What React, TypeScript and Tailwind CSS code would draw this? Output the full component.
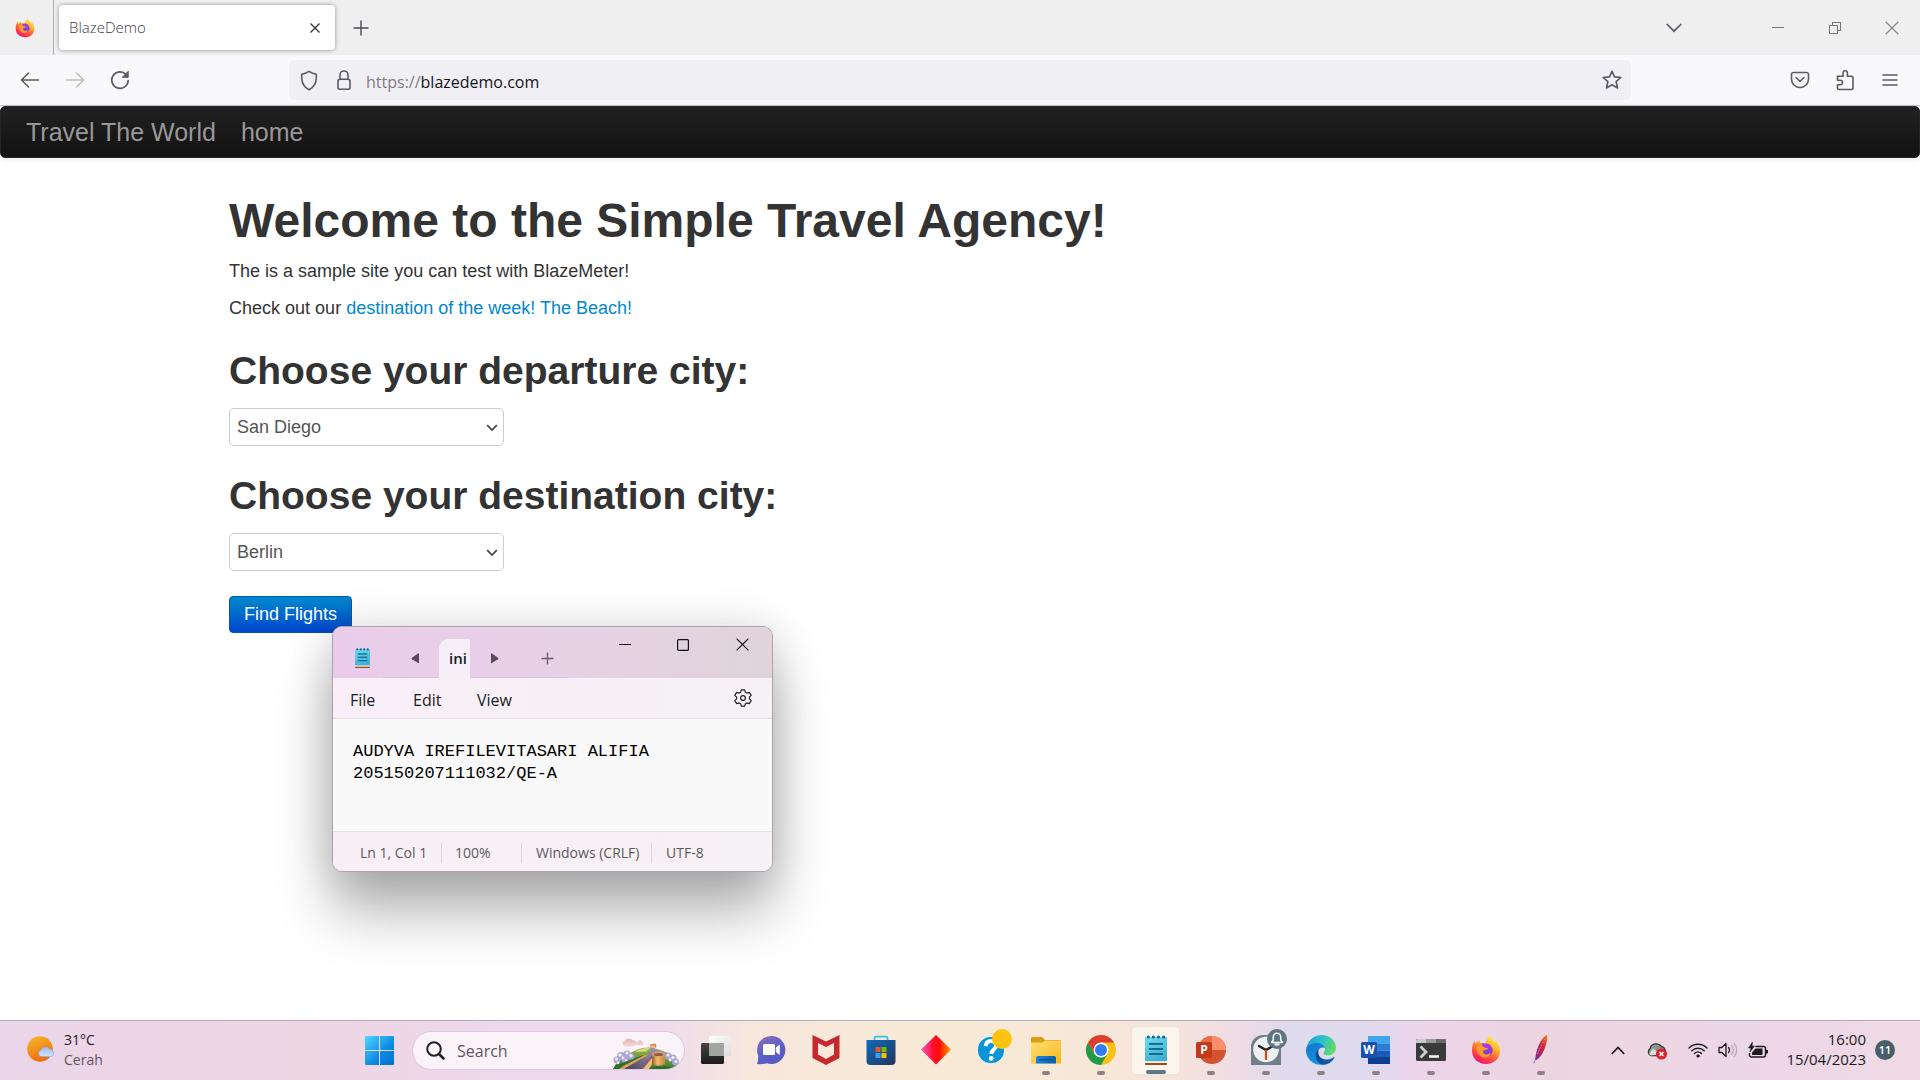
import React, { useId } from "react";

const UI = "font-['Open_Sans','Noto_Sans',sans-serif]";

/* ---------- shared logos ---------- */

function FirefoxLogo({ size }: { size: number }) {
  const id = useId();
  return (
    <svg width={size} height={size} viewBox="0 0 30 30" aria-hidden="true">
      <defs>
        <linearGradient id={id + "a"} x1="0.8" y1="0" x2="0.3" y2="1">
          <stop offset="0" stopColor="#fff44f" />
          <stop offset="0.35" stopColor="#ffb82a" />
          <stop offset="0.6" stopColor="#ff6a32" />
          <stop offset="0.85" stopColor="#ff2b56" />
          <stop offset="1" stopColor="#e31587" />
        </linearGradient>
        <linearGradient id={id + "b"} x1="0.7" y1="0" x2="0.3" y2="1">
          <stop offset="0" stopColor="#b833e1" />
          <stop offset="1" stopColor="#5b4bd0" />
        </linearGradient>
      </defs>
      <path
        fill={`url(#${id}a)`}
        d="M4 4.8C3.8 6.6 4 7.6 4.6 8.6L8.6 5.2C8.7 7 9.4 8 10.4 8.3L14.3 8.6C15.2 5 17 2.6 19.8.6 20 3.6 22 5 23.4 7 24 7.6 24.8 7 24.7 5.6 27.3 8 29 12 29 16 29 23.5 23 29 15 29S1 23.5 1 15.5C1 11.2 2.2 7.6 4 4.8Z"
      />
      <circle cx="15.3" cy="15.2" r="6.4" fill={`url(#${id}b)`} />
      <path
        fill="#ff9a2e"
        d="M5.5 12.5C8 10 11.5 10.2 13.5 12.2 14.5 13 16 12.8 17 13.2 16.5 14.8 14 14.8 12.5 15.5 11.5 16.5 12 18.5 14 19.2 16.5 20 18.5 18.5 19.5 17.5 19 21.5 15.5 23.2 12 22.2 8 21 5.5 17 5.5 12.5Z"
      />
      <path fill="#a63be8" d="M10.5 8.3 14.3 8.6C16.5 8.6 18 9 19.5 10.4 17 10 15.5 10.6 15 11.8 13 11.5 11 10.5 10.5 8.3Z" />
    </svg>
  );
}

function NotepadLogo({ w, h }: { w: number; h: number }) {
  const id = useId();
  return (
    <svg width={w} height={h} viewBox="0 0 22 30" preserveAspectRatio="none" aria-hidden="true">
      <defs>
        <linearGradient id={id} x1="0" y1="0" x2="0.4" y2="1">
          <stop offset="0" stopColor="#72dcf4" />
          <stop offset="1" stopColor="#3fb0d4" />
        </linearGradient>
      </defs>
      <rect x="0" y="27.5" width="22" height="2.5" rx="1" fill="#a5480f" />
      <rect x="0" y="25.5" width="22" height="2.3" fill="#fff" />
      <rect x="0" y="2" width="22" height="24.2" rx="1" fill={`url(#${id})`} />
      <g fill="#11698a">
        <circle cx="3.3" cy="2" r="1.6" />
        <circle cx="8.4" cy="2" r="1.6" />
        <circle cx="13.5" cy="2" r="1.6" />
        <circle cx="18.6" cy="2" r="1.6" />
        <rect x="4" y="8" width="14" height="1.9" />
        <rect x="4" y="13" width="14" height="1.9" />
        <rect x="4" y="18" width="14" height="1.9" />
      </g>
    </svg>
  );
}

/* ---------- browser chrome ---------- */

function TabStrip() {
  return (
    <div className="flex h-[55px] items-stretch bg-[#efefef]">
      <div className="flex w-[54px] shrink-0 items-center justify-center border-r border-[#b0b0b4] pr-1">
        <FirefoxLogo size={20} />
      </div>
      <div className="my-[5px] ml-[5px] flex w-[276px] items-center justify-between rounded-[4px] bg-white pl-[10px] pr-3 shadow-[0_0_4px_rgba(0,0,0,0.4)]">
        <span className="text-[15px] font-light text-[#3a3944]">BlazeDemo</span>
        <button aria-label="Close tab" className="flex size-4 items-center justify-center">
          <svg width="10" height="10" viewBox="0 0 10 10" stroke="#33323c" strokeWidth="1.3" fill="none">
            <path d="M.5.5 9.5 9.5M9.5.5.5 9.5" />
          </svg>
        </button>
      </div>
      <button aria-label="New tab" className="ml-[18px] flex w-4 items-center justify-center">
        <svg width="16" height="16" viewBox="0 0 16 16" stroke="#4a4954" strokeWidth="1.4">
          <path d="M8 .5V15.5M.5 8H15.5" />
        </svg>
      </button>
      <div className="ml-auto flex items-center">
        <button aria-label="List all tabs" className="mr-[46px] flex h-full w-[58px] items-center justify-center">
          <svg width="16" height="10" viewBox="0 0 16 10" fill="none" stroke="#5b5a66" strokeWidth="1.7">
            <path d="M.8 1 8 8.2 15.2 1" />
          </svg>
        </button>
        <button aria-label="Minimize" className="flex h-full w-[57px] items-center justify-center">
          <svg width="12" height="12" viewBox="0 0 12 12" stroke="#777" shapeRendering="crispEdges">
            <path d="M0 5.5H12" />
          </svg>
        </button>
        <button aria-label="Restore" className="flex h-full w-[57px] items-center justify-center">
          <svg width="12" height="12" viewBox="0 0 12 12" fill="none" stroke="#777" shapeRendering="crispEdges">
            <path d="M.5 3.5H8.5V11.5H.5ZM3.5 3V.5H11.5V8.5H9" />
          </svg>
        </button>
        <button aria-label="Close" className="flex h-full w-[57px] items-center justify-center">
          <svg width="14" height="14" viewBox="0 0 14 14" stroke="#777" strokeWidth="1.1">
            <path d="M.8.8 13.2 13.2M13.2.8.8 13.2" />
          </svg>
        </button>
      </div>
    </div>
  );
}

function NavBar() {
  const ink = "#5b5a66";
  return (
    <div className="flex h-[51px] items-center border-b border-[#c8c8cc] bg-[#f9f9fb]">
      <div className="flex w-[289px] shrink-0 items-center gap-[21px] pl-[18px]">
        <button aria-label="Back" className="flex size-6 items-center justify-center">
          <svg width="20" height="18" viewBox="0 0 20 18" fill="none" stroke={ink} strokeWidth="1.6" strokeLinecap="round" strokeLinejoin="round">
            <path d="M18.5 9H1.5M8.5 2 1.5 9 8.5 16" />
          </svg>
        </button>
        <button aria-label="Forward" disabled className="flex size-6 items-center justify-center">
          <svg width="20" height="18" viewBox="0 0 20 18" fill="none" stroke="#bcbcc2" strokeWidth="1.6" strokeLinecap="round" strokeLinejoin="round">
            <path d="M1.5 9H18.5M11.5 2 18.5 9 11.5 16" />
          </svg>
        </button>
        <button aria-label="Reload" className="flex size-6 items-center justify-center">
          <svg width="20" height="20" viewBox="0 0 20 20" fill="none" stroke={ink} strokeWidth="1.7" strokeLinecap="round">
            <path d="M16 4.5A8.2 8.2 0 1 0 18.2 10.5" />
            <path d="M18.2 1.6V7.3H12.6Z" fill={ink} strokeWidth="1" strokeLinejoin="round" />
          </svg>
        </button>
      </div>
      <div className="flex h-10 flex-1 items-center rounded-[5px] bg-[#f0eff4] pl-[10px] pr-[9px]">
        <button aria-label="Tracking protection" className="flex size-5 items-center justify-center">
          <svg width="20" height="21" viewBox="0 0 20 21" fill="none" stroke={ink} strokeWidth="1.6" strokeLinejoin="round">
            <path d="M10 1.3Q13.500 3.700 17.300 4.300V7.500C17.300 13 14.500 17.500 10 19.700 5.500 17.500 2.700 13 2.700 7.500V4.300Q6.500 3.700 10 1.300Z" />
          </svg>
        </button>
        <button aria-label="Site security" className="ml-[15px] flex size-5 items-center justify-center">
          <svg width="16" height="20" viewBox="0 0 16 20" fill="none" stroke={ink} strokeWidth="1.6">
            <path d="M4 9.5V5A4 4 0 0 1 12 5V9.5" />
            <rect x="2" y="9.2" width="12" height="10" rx="2" />
          </svg>
        </button>
        <label className="ml-3 flex flex-1 items-center pt-[3px] text-[16px] text-[#7d7c86]">
          <span>https://</span>
          <input aria-label="Address" defaultValue="blazedemo.com" className="min-w-0 flex-1 bg-transparent text-[#15141a] outline-none" />
        </label>
        <button aria-label="Bookmark this page" className="flex size-5 items-center justify-center">
          <svg width="20" height="20" viewBox="0 0 20 20" fill="none" stroke={ink} strokeWidth="1.6" strokeLinejoin="round">
            <path d="M10 1.2 12.5 6.9 18.8 7.5 14.1 11.7 15.5 18 10 14.7 4.5 18 5.9 11.7 1.2 7.5 7.5 6.9Z" />
          </svg>
        </button>
      </div>
      <div className="flex w-[289px] shrink-0 items-center justify-end gap-[25px] pr-5">
        <button aria-label="Save to Pocket" className="flex size-5 items-center justify-center">
          <svg width="20" height="18" viewBox="0 0 20 18" fill="none" stroke={ink} strokeWidth="1.6" strokeLinecap="round" strokeLinejoin="round">
            <path d="M3 1.5H17A1.700 1.700 0 0 1 18.500 3V8A8.500 8.500 0 0 1 1.500 8V3A1.700 1.700 0 0 1 3 1.500Z" />
            <path d="M6 6.5 10 10.3 14 6.5" />
          </svg>
        </button>
        <button aria-label="Extensions" className="flex size-5 items-center justify-center">
          <svg width="20" height="22" viewBox="0 0 20 22" fill="none" stroke={ink} strokeWidth="1.6" strokeLinejoin="round">
            <path d="M2.500 7.200H8V4A2.200 2.200 0 0 1 12.400 4V7.200H16.500A1.500 1.500 0 0 1 18 8.700V19A1.500 1.500 0 0 1 16.500 20.500H4A1.500 1.500 0 0 1 2.500 19V15.700H5.200A2.200 2.200 0 0 0 5.200 11.300H2.500Z" />
          </svg>
        </button>
        <button aria-label="Menu" className="flex size-5 items-center justify-center">
          <svg width="16" height="14" viewBox="0 0 16 14" stroke={ink} strokeWidth="1.5" strokeLinecap="round">
            <path d="M1 2H15M1 7H15M1 12H15" />
          </svg>
        </button>
      </div>
    </div>
  );
}

/* ---------- web page ---------- */

function CitySelect({ label, options }: { label: string; options: string[] }) {
  return (
    <div className="relative h-[38px] w-[275px]">
      <select
        aria-label={label}
        className="h-full w-full appearance-none rounded-[5px] border border-[#ccc] bg-white pl-[7px] pr-8 text-[18px] text-[#555]"
      >
        {options.map((o) => (
          <option key={o}>{o}</option>
        ))}
      </select>
      <svg className="pointer-events-none absolute right-[6px] top-4" width="12" height="8" viewBox="0 0 12 8" fill="none" stroke="#444" strokeWidth="1.7">
        <path d="M1.2 1.2 6 6 10.8 1.2" />
      </svg>
    </div>
  );
}

function TravelPage() {
  return (
    <div className="font-['Liberation_Sans',Arial,sans-serif] text-[18px] leading-[25px] text-[#333]">
      <nav className="flex h-[52px] items-center gap-[25px] rounded-[5px] border border-[#252525] bg-linear-to-b from-[#222] to-[#111] px-[25px] text-[25px] text-[#999] shadow-[0_1px_5px_rgba(0,0,0,0.1)]">
        <a href="#">Travel The World</a>
        <a href="#">home</a>
      </nav>
      <main className="mx-auto w-[76.14%] pt-[38px]">
        <h1 className="mb-[13px] text-[48px] font-bold leading-[50px]">Welcome to the Simple Travel Agency!</h1>
        <p className="mb-3">The is a sample site you can test with BlazeMeter!</p>
        <p>
          Check out our{" "}
          <a href="#" className="text-[#0088cc]">
            destination of the week! The Beach!
          </a>
        </p>
        <h2 className="mb-3 mt-[25px] text-[39px] font-bold leading-[50px]">Choose your departure city:</h2>
        <CitySelect label="Departure city" options={["San Diego", "Paris", "Boston"]} />
        <h2 className="mb-3 mt-[25px] text-[39px] font-bold leading-[50px]">Choose your destination city:</h2>
        <CitySelect label="Destination city" options={["Berlin", "Rome", "London"]} />
        <button className="mt-[25px] h-[37px] rounded-[4px] border border-[#0055b8] bg-linear-to-b from-[#0088cc] to-[#0044cc] px-[14px] text-[18px] leading-[25px] text-white">
          Find Flights
        </button>
      </main>
    </div>
  );
}

/* ---------- notepad window ---------- */

function NotepadWindow() {
  return (
    <section
      aria-label="Notepad"
      className="absolute left-[332px] top-[626px] flex w-[441px] flex-col overflow-hidden rounded-[10px] border border-[#a9a4a9] bg-[#f9f9f9] shadow-[0_40px_56px_rgba(0,0,0,0.3),0_0_44px_rgba(0,0,0,0.14)]"
    >
      <div className="flex h-[51px] bg-linear-to-r from-[#eaccea] via-[#e7d1e6] to-[#e0d4da]">
        <div className="flex items-end">
          <div className="flex h-[38px] w-[50px] items-center justify-end pb-[2px] pr-[13px]">
            <NotepadLogo w={15} h={20} />
          </div>
          <div className="flex h-[38px] w-[56px] items-center justify-end border-b border-[#d8c2da] pr-[19px]">
            <button aria-label="Scroll tabs left">
              <svg width="9" height="11" viewBox="0 0 9 11" fill="#5a4a5a">
                <path d="M8 .5V10.5L1 6.3Q0 5.5 1 4.7L7 .5Z" />
              </svg>
            </button>
          </div>
          <button className="h-[39px] w-[31px] rounded-tl-[9px] bg-[#f7eff7] pl-[10px] text-left text-[15px] font-semibold text-[#1b1b1b]">ini</button>
          <div className="flex h-[38px] w-[98px] items-center border-b border-[#d8c2da] pl-5">
            <button aria-label="Scroll tabs right">
              <svg width="9" height="11" viewBox="0 0 9 11" fill="#5a4a5a">
                <path d="M1 .5V10.5L8 6.3Q9 5.5 8 4.7L2 .5Z" />
              </svg>
            </button>
            <button aria-label="New tab" className="ml-[42px]">
              <svg width="13" height="13" viewBox="0 0 13 13" stroke="#6a5c6a" strokeWidth="1.3">
                <path d="M6.5.5V12.5M.5 6.5H12.5" />
              </svg>
            </button>
          </div>
        </div>
        <div className="ml-auto flex h-[35px]">
          <button aria-label="Minimize" className="flex w-[58px] items-center justify-center">
            <svg width="12" height="12" viewBox="0 0 12 12" stroke="#111" shapeRendering="crispEdges">
              <path d="M0 5.5H12" />
            </svg>
          </button>
          <button aria-label="Maximize" className="flex w-[58px] items-center justify-center">
            <svg width="12" height="12" viewBox="0 0 12 12" stroke="#111" fill="none" strokeWidth="1.2">
              <rect x=".6" y=".6" width="10.8" height="10.8" rx="1" />
            </svg>
          </button>
          <button aria-label="Close" className="flex w-[60px] items-center justify-center">
            <svg width="13" height="13" viewBox="0 0 13 13" stroke="#111" strokeWidth="1.2">
              <path d="M.6.6 12.4 12.4M12.4.6.6 12.4" />
            </svg>
          </button>
        </div>
      </div>
      <div className="flex h-[41px] items-center border-b border-[#e6dfe6] bg-linear-to-r from-[#fbeef8] via-[#f6f0f6] to-[#f6f1f5] pl-[17px] pr-5 text-[16px] text-[#1b1b1b]">
        <button className="w-[63px] pt-[3px] text-left">File</button>
        <button className="w-16 pt-[3px] text-left">Edit</button>
        <button className="pt-[3px] text-left">View</button>
        <button aria-label="Settings" className="ml-auto">
          <svg width="18" height="18" viewBox="0 0 18 18" fill="none" stroke="#222" strokeWidth="1.2" strokeLinejoin="round">
            <path d="M7.3.8H10.7L11.3 3.2 12.9 4.1 15.3 3.4 17.2 6.4 15.4 8.1V9.9L17.2 11.6 15.3 14.6 12.9 13.9 11.3 14.8 10.7 17.2H7.3L6.7 14.8 5.1 13.9 2.7 14.6.8 11.6 2.6 9.9V8.1L.8 6.4 2.7 3.4 5.1 4.1 6.7 3.2Z" />
            <circle cx="9" cy="9" r="2.4" />
          </svg>
        </button>
      </div>
      <textarea
        aria-label="Text editor"
        spellCheck={false}
        defaultValue={"AUDYVA IREFILEVITASARI ALIFIA\n205150207111032/QE-A"}
        className="h-[112px] resize-none bg-[#f9f9f9] px-5 pt-[22px] font-['Liberation_Mono',monospace] text-[17px] leading-[22px] text-black outline-none"
      />
      <div className="flex h-10 items-center border-t border-[#e6dfe6] bg-linear-to-r from-[#f8eff6] to-[#f6f1f5] pt-[2px] text-[14px] leading-5 text-[#5c5a5e]">
        <span className="w-[109px] border-r border-[#ddd5dc] pl-[27px]">Ln 1, Col 1</span>
        <span className="w-20 border-r border-[#ddd5dc] pl-[13px]">100%</span>
        <span className="w-[130px] whitespace-nowrap border-r border-[#ddd5dc] pl-[14px]">Windows (CRLF)</span>
        <span className="pl-[14px]">UTF-8</span>
      </div>
    </section>
  );
}

/* ---------- taskbar ---------- */

type App = { name: string; icon: React.ReactNode; state?: "open" | "active" };

function Svg({ children }: { children: React.ReactNode }) {
  return (
    <svg width="30" height="30" viewBox="0 0 30 30" aria-hidden="true" className="overflow-visible">
      {children}
    </svg>
  );
}

const apps: App[] = [
  {
    name: "Task view",
    icon: (
      <Svg>
        <defs>
          <linearGradient id="tv1" x1="0" y1="0" x2="0" y2="1"><stop offset="0" stopColor="#444" /><stop offset="1" stopColor="#1c1c1c" /></linearGradient>
          <linearGradient id="tv2" x1="0" y1="0" x2="1" y2="1"><stop offset="0" stopColor="#fff" /><stop offset="1" stopColor="#dcdcdc" /></linearGradient>
        </defs>
        <rect x="0" y="8" width="23" height="21" rx="1.5" fill="url(#tv1)" />
        <rect x="8" y="1" width="22" height="20" rx="1.5" fill="url(#tv2)" />
        <path d="M8 8H23V21H9.500A1.500 1.500 0 0 1 8 19.500Z" fill="#a4a4a2" />
      </Svg>
    ),
  },
  {
    name: "Chat",
    icon: (
      <Svg>
        <defs>
          <linearGradient id="ch" x1="0.2" y1="0" x2="0.7" y2="1"><stop offset="0" stopColor="#8a6bb5" /><stop offset="0.5" stopColor="#5b62c8" /><stop offset="1" stopColor="#5557c4" /></linearGradient>
        </defs>
        <path d="M15.500 1A14 14 0 1 1 11 28.300Q6 29.500 1 29 2.500 25.500 2.200 20.500A14 14 0 0 1 15.500 1Z" fill="url(#ch)" />
        <rect x="7" y="9" width="12" height="11" rx="1.5" fill="#fff" />
        <path d="M20.2 12.5 23.5 10V19.500L20.200 17Z" fill="#fff" stroke="#fff" strokeWidth=".6" strokeLinejoin="round" />
      </Svg>
    ),
  },
  {
    name: "McAfee",
    icon: (
      <Svg>
        <path fillRule="evenodd" d="M1.500 0 15 6.500 28.500 0V23L15 30 1.500 23ZM7 8V19.500L15 24 23 19.500V8L15 12Z" fill="#c5282f" />
      </Svg>
    ),
  },
  {
    name: "Microsoft Store",
    icon: (
      <Svg>
        <defs>
          <linearGradient id="st" x1="0" y1="0" x2="1" y2="1"><stop offset="0" stopColor="#0f6cbd" /><stop offset="1" stopColor="#22345c" /></linearGradient>
        </defs>
        <path d="M8.500 6V3A1.500 1.500 0 0 1 10 1.600H20A1.500 1.500 0 0 1 21.500 3V6" fill="none" stroke="#35c1f1" strokeWidth="1.8" />
        <path d="M.5 5H29.500V26A4 4 0 0 1 25.500 30H4.500A4 4 0 0 1 .5 26Z" fill="url(#st)" />
        <path d="M9.500 12H14.500V17H9.500Z" fill="#f25022" />
        <path d="M15.500 12H20.500V17H15.500Z" fill="#7fba00" />
        <path d="M9.500 18H14.500V23H9.500Z" fill="#2aa7f0" />
        <path d="M15.500 18H20.500V23H15.500Z" fill="#ffb900" />
      </Svg>
    ),
  },
  {
    name: "Diamond launcher",
    icon: (
      <Svg>
        <defs>
          <linearGradient id="dm" x1="0" y1="0" x2="1" y2="0"><stop offset="0" stopColor="#f25ad0" /><stop offset="0.4" stopColor="#ff1030" /><stop offset="0.6" stopColor="#ff0a0a" /><stop offset="1" stopColor="#ff9d00" /></linearGradient>
        </defs>
        <path d="M15 0 30 14.500 15 29.500 0 14.500Z" fill="url(#dm)" />
      </Svg>
    ),
  },
  {
    name: "Get help",
    icon: (
      <Svg>
        <circle cx="15" cy="15" r="13.8" fill="#0a95d8" stroke="#fff" strokeWidth="1" />
        <path d="M9.800 11.200C10 7.500 12.300 6 15 6 18 6 20.200 7.800 20.200 10.600 20.200 14 15.300 14.500 15.300 19" fill="none" stroke="#fff" strokeWidth="4" />
        <circle cx="15.2" cy="23.5" r="2.4" fill="#fff" />
        <circle cx="26" cy="4" r="10" fill="#ffc20e" />
      </Svg>
    ),
  },
  {
    name: "File Explorer",
    state: "open",
    icon: (
      <Svg>
        <defs>
          <linearGradient id="fe" x1="0" y1="0" x2="1" y2="1"><stop offset="0" stopColor="#ffdf75" /><stop offset="1" stopColor="#f7b81c" /></linearGradient>
          <linearGradient id="fb" x1="0" y1="0" x2="1" y2="0"><stop offset="0" stopColor="#1a86da" /><stop offset="1" stopColor="#0a5fb0" /></linearGradient>
        </defs>
        <path d="M0 3.500A1.500 1.500 0 0 1 1.500 2H11L14 5H28.500A1.500 1.500 0 0 1 30 6.500V12H0Z" fill="#dd9d10" />
        <path d="M0 7.500H11.500L14 5.500H30V28.500H0Z" fill="url(#fe)" />
        <path d="M5 28.500V23A2 2 0 0 1 7 21H23A2 2 0 0 1 25 23V28.500Z" fill="url(#fb)" />
        <path d="M8 24.700H22" stroke="#0b4a8e" strokeWidth="1.3" />
      </Svg>
    ),
  },
  {
    name: "Chrome",
    state: "open",
    icon: (
      <Svg>
        <circle cx="15" cy="15" r="15" fill="#fbc116" />
        <path d="M2 7.500A15 15 0 0 0 15 30L21.500 18.800 8.500 18.800Z" fill="#219a4b" />
        <path d="M15 7.500H28A15 15 0 0 0 2 7.500L8.500 18.800Z" fill="#dc3d30" />
        <circle cx="15" cy="15" r="7.5" fill="#fff" />
        <circle cx="15" cy="15" r="6" fill="#2f7df0" />
      </Svg>
    ),
  },
  { name: "Notepad", state: "active", icon: <NotepadLogo w={22} h={30} /> },
  {
    name: "PowerPoint",
    state: "open",
    icon: (
      <Svg>
        <circle cx="16" cy="15" r="14" fill="#d35230" />
        <path d="M16 1A14 14 0 0 1 30 15H16Z" fill="#ff8f6b" />
        <path d="M16 1V15H2A14 14 0 0 1 16 1Z" fill="#ed6c47" />
        <rect x="0" y="7" width="16" height="16" rx="1.5" fill="#c13b1b" />
        <text x="8" y="19" textAnchor="middle" fontSize="12" fontWeight="700" fill="#fff" fontFamily="Open Sans">P</text>
      </Svg>
    ),
  },
  {
    name: "Clock",
    state: "open",
    icon: (
      <Svg>
        <path d="M0 30V12A12 12 0 0 1 12 0H22A8 8 0 0 1 30 8V30Z" fill="#6f7e88" />
        <circle cx="15" cy="14.5" r="12.8" fill="#eef0f1" />
        <path d="M15 15 8 11M15 15 22 11" stroke="#222" strokeWidth="2.4" strokeLinecap="round" />
        <path d="M15 15V25" stroke="#d9481c" strokeWidth="2.2" />
        <circle cx="26" cy="4" r="10" fill="#5c7683" />
        <path d="M20.500 7.500 22.300 5V2A3.700 3.700 0 0 1 29.700 2V5L31.500 7.500Z" fill="none" stroke="#fff" strokeWidth="1.5" strokeLinejoin="round" />
        <path d="M24.300 9.500H27.700" stroke="#fff" strokeWidth="1.8" strokeLinecap="round" />
      </Svg>
    ),
  },
  {
    name: "Edge",
    state: "open",
    icon: (
      <Svg>
        <defs>
          <linearGradient id="e1" x1="0" y1="0.3" x2="1" y2="0.6"><stop offset="0" stopColor="#1a9fdc" /><stop offset="0.5" stopColor="#2fc2c8" /><stop offset="1" stopColor="#62e05a" /></linearGradient>
          <linearGradient id="e2" x1="0" y1="0" x2="0.6" y2="1"><stop offset="0" stopColor="#1476c8" /><stop offset="1" stopColor="#1593e6" /></linearGradient>
          <linearGradient id="e3" x1="0" y1="0" x2="1" y2="0.5"><stop offset="0" stopColor="#0b3f86" /><stop offset="1" stopColor="#1161b0" /></linearGradient>
        </defs>
        <path d="M.3 13C2 5 8.500 0 15.500 0 24 0 30 6.200 30 12.800 30 17.500 26.500 20.300 22.500 20.300 19 20.300 17.500 19.200 17.500 18.200 17.500 17.200 19 16.500 19 14 19 11 16 8.500 11 8.500 6 8.500 2.300 10.500.3 13Z" fill="url(#e1)" />
        <path d="M.3 13C2.300 9.500 6.500 8 11 8 15 8 18 10 19 13 15 11 11 14.500 11 19.500 11 24 14 28 18.500 29.500 8 31.500 0 24 0 15.500Z" fill="url(#e2)" />
        <path d="M13 13.800C11 18 13 24.800 21 24.500 24 24.400 26 23 27.500 22.200 28.200 21.900 28.600 22.500 28.200 23.200 25.500 27.500 22 29.700 18 29.700 12 29.700 9.500 24 9.800 20 10 17 11.500 15 13 13.800Z" fill="url(#e3)" />
      </Svg>
    ),
  },
  {
    name: "Word",
    state: "open",
    icon: (
      <Svg>
        <path d="M7 1H29V8.500H7Z" fill="#41a5ee" />
        <path d="M7 8.500H29V15.500H7Z" fill="#2b7cd3" />
        <path d="M7 15.500H29V22H7Z" fill="#185abd" />
        <path d="M7 22H29V29H7Z" fill="#103f91" />
        <rect x="0" y="7" width="16" height="16" rx="1.5" fill="#1850ad" />
        <text x="8" y="19" textAnchor="middle" fontSize="12" fontWeight="700" fill="#fff" fontFamily="Open Sans">W</text>
      </Svg>
    ),
  },
  {
    name: "Terminal",
    state: "open",
    icon: (
      <Svg>
        <rect x="0" y="4" width="30" height="22" rx="1.5" fill="#3a3a3a" />
        <path d="M0 8V5.500A1.500 1.500 0 0 1 1.500 4H10V8Z" fill="#c9c9c9" />
        <path d="M10 4H20V8H10Z" fill="#999" />
        <path d="M20 4H28.500A1.500 1.500 0 0 1 30 5.500V8H20Z" fill="#6b6b6b" />
        <path d="M4.500 11.500 10 17 4.500 22.500" fill="none" stroke="#cfcfcf" strokeWidth="2.8" />
        <path d="M13 21.500H23" stroke="#f4f4f4" strokeWidth="2.6" />
      </Svg>
    ),
  },
  { name: "Firefox", state: "open", icon: <FirefoxLogo size={30} /> },
  {
    name: "Apache JMeter",
    state: "open",
    icon: (
      <Svg>
        <defs>
          <linearGradient id="jm" x1="1" y1="0" x2="0" y2="1"><stop offset="0" stopColor="#f28a1c" /><stop offset="0.4" stopColor="#d42135" /><stop offset="0.75" stopColor="#9b2a72" /><stop offset="1" stopColor="#5a3a95" /></linearGradient>
        </defs>
        <path d="M21 0C22 3 20.500 9 18.500 14 16.500 19 13 24 9.500 25.500 9 21 11 13 14.500 7 16.500 3.500 18.500 1 21 0Z" fill="url(#jm)" />
        <path d="M18.500 4C15 11 11 20 7.500 29" fill="none" stroke="#8a3a8e" strokeWidth="1" strokeDasharray="1.8 1.2" />
        <path d="M18.500 4C16 9 13.500 14.500 11.500 19" fill="none" stroke="#f7b9a0" strokeWidth=".8" strokeDasharray="1.5 1.5" />
      </Svg>
    ),
  },
];

function TaskButton({ app }: { app: App }) {
  return (
    <button
      aria-label={app.name}
      className={
        app.state === "active"
          ? "relative mx-[3px] flex h-[49px] w-[49px] items-center justify-center rounded-[5px] border border-[#efe3da] bg-[#fcf5ec] pb-px"
          : "relative flex h-[49px] w-[55px] items-center justify-center pb-px"
      }
    >
      {app.icon}
      {app.state === "open" && <span className="absolute bottom-0 h-1 w-2 rounded-full bg-[#8b8284]" />}
      {app.state === "active" && <span className="absolute bottom-0 h-1 w-5 rounded-full bg-[#5f7887]" />}
    </button>
  );
}

/* The Great Wall winding over tree-covered hills */
function SearchArt() {
  return (
    <svg width="68" height="31" viewBox="0 0 68 31" aria-hidden="true">
      <defs>
        <linearGradient id="cloud" x1="0" y1="0" x2="0" y2="1"><stop offset="0" stopColor="#e3b3b8" /><stop offset="1" stopColor="#f3d9da" /></linearGradient>
        <linearGradient id="barrel" x1="0" y1="0" x2="1" y2="0"><stop offset="0" stopColor="#9a5a2c" /><stop offset="0.4" stopColor="#f0b96a" /><stop offset="1" stopColor="#c98545" /></linearGradient>
        <linearGradient id="hill" x1="0" y1="0" x2="0" y2="1"><stop offset="0" stopColor="#9bb648" /><stop offset="1" stopColor="#3f7d33" /></linearGradient>
        <linearGradient id="road" x1="1" y1="0" x2="0" y2="1"><stop offset="0" stopColor="#a99bb8" /><stop offset="1" stopColor="#4b4258" /></linearGradient>
      </defs>
      <path fill="url(#cloud)" d="M11 8A2.500 2.500 0 0 1 11 3.500 5 4.500 0 0 1 19.500 2 4 4 0 0 1 23.500 4.500Q25 4.500 25 3A2.800 2.500 0 0 1 29.500 4 2 2 0 0 1 30 7Q27 8 24 6.500 18 10 11 8Z" />
      <path fill="url(#hill)" d="M0 31Q4 22 13 18 24 9 37 9.500 52 12 60 19L66 27 60 30 50 31Z" />
      <path fill="#d5dc8c" d="M22 14Q29 9.500 37 10L33 13.500Z" />
      <g fill="#aaa5d4">
        <circle cx="4" cy="22" r="3.500" />
        <circle cx="8" cy="18" r="4" />
        <circle cx="14" cy="16" r="3.500" />
        <circle cx="18" cy="18.500" r="3.500" />
        <circle cx="12" cy="22" r="3.500" />
        <circle cx="55" cy="18" r="3.500" />
        <circle cx="60" cy="20" r="3.500" />
        <circle cx="62.500" cy="24" r="3.500" />
      </g>
      <g fill="#f1eefb">
        <circle cx="3.500" cy="21" r="1.500" />
        <circle cx="7" cy="17" r="1.700" />
        <circle cx="10" cy="20" r="1.400" />
        <circle cx="14" cy="15" r="1.600" />
        <circle cx="18" cy="17.500" r="1.500" />
        <circle cx="13" cy="22.500" r="1.300" />
        <circle cx="5" cy="25" r="1.400" />
        <circle cx="55" cy="17" r="1.500" />
        <circle cx="60" cy="19.500" r="1.600" />
        <circle cx="63" cy="23.500" r="1.500" />
        <circle cx="57" cy="22" r="1.400" />
      </g>
      <path fill="#2f6d2e" d="M0 31 3 27 20 21 30 17 28 21 10 31Z" />
      <path fill="#dca05a" d="M6 31 12 27 30 18 36 16 33 20 18 31Z" />
      <path fill="url(#road)" d="M11 31Q24 23 33 18.500 38 15 37 9.500L42 9.500Q42 14 46 15.500L41 18 28 31Z" />
      <path fill="#efbd73" d="M28 31 39 18.500V26L36 31Z" />
      <path fill="#7b5a86" d="M27 31 39 17.500 40 18.500 30 31Z" />
      <path fill="#9a8fae" d="M42 11 55 15 52 17 44 15.500Z" />
      <path fill="#d08044" d="M37 6.500 42.500 5.500 43.500 8.500 42 10 38 10Z" />
      <path fill="#f0c07e" d="M38 7.500H42V10H38.500Z" />
      <path fill="url(#barrel)" d="M39 16V26Q45 29.500 52 26V16Z" />
      <ellipse cx="45.500" cy="16.200" rx="6.500" ry="2.500" fill="#e3a460" />
      <ellipse cx="45.500" cy="16.500" rx="4.800" ry="1.500" fill="#8a5a4a" />
      <path fill="#2f6d2e" d="M36 31Q40 27 47 28.500 55 27 60 30L58 31Z" />
    </svg>
  );
}

function Taskbar() {
  return (
    <footer className="relative grid h-[60px] grid-cols-[1fr_auto_1fr] items-center border-t border-[#b9a9b6] bg-[linear-gradient(90deg,#ebd5ea_0%,#edd6e2_16%,#eed8ee_28%,#eddaee_34%,#f7e7dc_39%,#f9ead6_50%,#f6e5da_61%,#f0dde4_64%,#dfdaec_67%,#e0daee_71%,#ecd5ea_74%,#ecd5e0_80%,#edd7e2_86%,#ecd6ea_90%,#efdae4_100%)]">
      <button className="flex items-center gap-2 pb-[2px] pl-[26px] text-left text-[14px] leading-5">
        <svg width="30" height="28" viewBox="0 0 30 28" aria-hidden="true">
          <defs>
            <linearGradient id="sun" x1="0.3" y1="0" x2="0.7" y2="1"><stop offset="0" stopColor="#f0b428" /><stop offset="1" stopColor="#f2660f" /></linearGradient>
            <linearGradient id="cl" x1="0" y1="0" x2="0" y2="1"><stop offset="0" stopColor="#a3bdf0" /><stop offset="1" stopColor="#cfe2fb" /></linearGradient>
          </defs>
          <circle cx="14" cy="13" r="12.8" fill="url(#sun)" />
          <path d="M15 20.500A3.200 3.200 0 0 1 14.500 14.500 5.500 5.500 0 0 1 24 13.500 3.800 3.800 0 0 1 26 20.500Z" fill="url(#cl)" stroke="#8fb0ea" strokeWidth=".7" />
        </svg>
        <span className="flex flex-col">
          <span className="text-[#1b1b1b]">31°C</span>
          <span className="text-[#5d555d]">Cerah</span>
        </span>
      </button>
      <div className="flex items-center">
        <button aria-label="Start" className="flex h-[49px] w-[55px] items-center justify-center">
          <svg width="29" height="29" viewBox="0 0 29 29">
            <defs>
              <linearGradient id="win" gradientUnits="userSpaceOnUse" x1="0" y1="0" x2="29" y2="29"><stop offset="0" stopColor="#4fd6ff" /><stop offset="0.6" stopColor="#0c8ae0" /><stop offset="1" stopColor="#0070cf" /></linearGradient>
            </defs>
            <path d="M1 0H14V14H0V1A1 1 0 0 1 1 0ZM15 0H28A1 1 0 0 1 29 1V14H15ZM0 15H14V29H1A1 1 0 0 1 0 28ZM15 15H29V28A1 1 0 0 1 28 29H15Z" fill="url(#win)" />
          </svg>
        </button>
        <label className="ml-[5px] mr-[3px] flex h-[39px] w-[273px] items-center overflow-hidden rounded-full border border-[#dcc8da] bg-[#faf3f8] pl-[13px] pr-[3px]">
          <svg width="19" height="19" viewBox="0 0 19 19" fill="none" stroke="#1e2424" strokeLinecap="round" aria-hidden="true">
            <circle cx="8" cy="8" r="6.8" strokeWidth="2" />
            <path d="M13 13 17.500 17.500" strokeWidth="2.5" />
          </svg>
          <input aria-label="Search" placeholder="Search" className="ml-3 w-0 min-w-0 flex-1 bg-transparent text-[16px] outline-none placeholder:text-[#5f575f]" />
          <span className="self-end">
            <SearchArt />
          </span>
        </label>
        {apps.map((a) => (
          <TaskButton key={a.name} app={a} />
        ))}
      </div>
      <div className="flex items-center justify-end pr-[25px]">
        <button aria-label="Show hidden icons" className="mr-[22px]">
          <svg width="14" height="9" viewBox="0 0 14 9" fill="none" stroke="#1b1b1b" strokeWidth="1.7">
            <path d="M.8 8 7 1.500 13.200 8" />
          </svg>
        </button>
        <button aria-label="OneDrive, sync problem" className="mr-5">
          <svg width="21" height="18" viewBox="0 0 21 18">
            <path d="M4 13.500A4 4 0 0 1 3 6.500 6.500 6.500 0 0 1 14.500 4.500 4.500 4.500 0 0 1 17 12L14 13.500Z" fill="#8c9490" stroke="#333" strokeWidth="1.3" />
            <path d="M2 12 6 6.500 14 12.500 4 13.500Z" fill="#d8dcda" />
            <circle cx="14.5" cy="12" r="5.6" fill="#dc2430" />
            <path d="M12.500 10 16.500 14M16.500 10 12.500 14" stroke="#fff" strokeWidth="1.5" />
          </svg>
        </button>
        <button aria-label="Network, volume and battery" className="mr-[18px] flex items-center gap-[10px] pb-px">
          <svg width="20" height="15" viewBox="0 0 20 15" fill="none" stroke="#1b1b1b" strokeWidth="1.4" strokeLinecap="round">
            <path d="M1 5A12.800 12.800 0 0 1 19 5M3.800 7.800A8.800 8.800 0 0 1 16.200 7.800M6.500 10.500A5 5 0 0 1 13.500 10.500" />
            <circle cx="10" cy="13" r="1.3" fill="#1b1b1b" strokeWidth=".6" />
          </svg>
          <svg width="20" height="16" viewBox="0 0 20 16" fill="none" strokeWidth="1.3" strokeLinecap="round" strokeLinejoin="round">
            <path d="M1 5.500H3.800L8 1.500V14.500L3.800 10.500H1Z" stroke="#1b1b1b" />
            <path d="M10.500 5.500A3.500 3.500 0 0 1 10.500 10.500" stroke="#1b1b1b" />
            <path d="M13.500 3.500A6.500 6.500 0 0 1 13.500 12.500M16.200 1.500A10 10 0 0 1 16.200 14.500" stroke="#b9a9b6" />
          </svg>
          <svg width="20" height="17" viewBox="0 0 20 17">
            <path d="M7.500 4.500H15.500A2 2 0 0 1 17.500 6.500V13A2 2 0 0 1 15.500 15H3.500A2 2 0 0 1 1.500 13V11" fill="none" stroke="#1b1b1b" strokeWidth="1.4" />
            <path d="M18 8H20V11.500H18Z" fill="#1b1b1b" />
            <path d="M7.500 6.500H14.500V13H4V10.500Z" fill="#1b1b1b" />
            <path d="M4.500 0 .5 6H3L2 10 6.500 4H4Z" fill="#1b1b1b" stroke="#1b1b1b" strokeWidth=".5" />
          </svg>
        </button>
        <button className="flex items-center gap-[9px] text-right text-[15px] leading-5 text-[#1b1b1b]">
          <span className="flex flex-col pb-1">
            <span>16:00</span>
            <span>15/04/2023</span>
          </span>
          <span className="mb-[2px] flex size-5 items-center justify-center rounded-full bg-[#465f6b] text-[11px] font-semibold text-white">11</span>
        </button>
      </div>
    </footer>
  );
}

export default function App() {
  return (
    <div className={`relative flex min-h-screen flex-col overflow-hidden bg-white ${UI}`}>
      <header>
        <TabStrip />
        <NavBar />
      </header>
      <div className="flex-1">
        <TravelPage />
      </div>
      <NotepadWindow />
      <Taskbar />
    </div>
  );
}
